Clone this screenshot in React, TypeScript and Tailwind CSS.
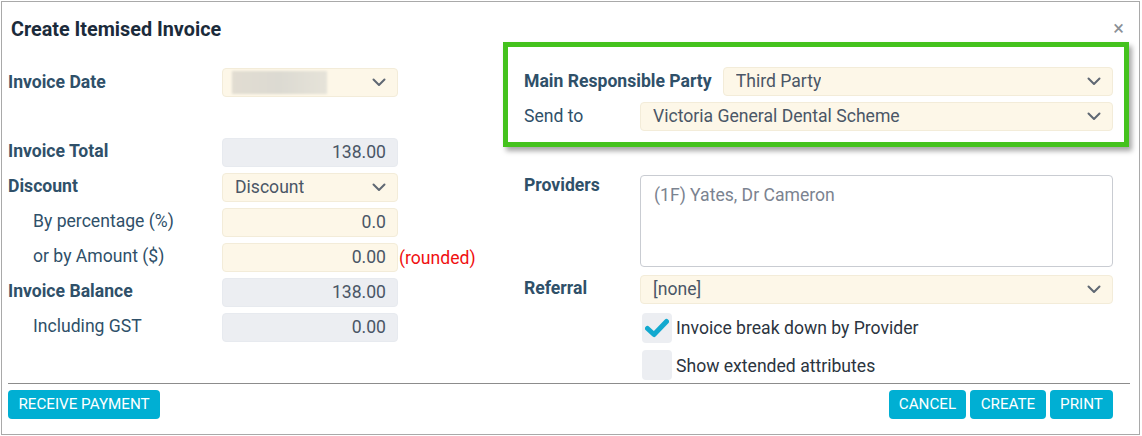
import React from "react";

const Chevron = () => (
  <svg width="14" height="9" viewBox="0 0 14 9" className="shrink-0">
    <path d="M1.5 1.5 L7 7 L12.5 1.5" fill="none" stroke="#5f6873" strokeWidth="2" strokeLinecap="round" strokeLinejoin="round" />
  </svg>
);

const Select = ({ children, className = "" }: { children?: React.ReactNode; className?: string }) => (
  <div className={`flex h-[29px] items-center justify-between rounded-[4px] border border-[#f3ecd9] bg-[#fdf7e8] pl-[12px] pr-[11px] text-[17.6px] text-[#4a5666] ${className}`}>
    <span className="truncate">{children}</span>
    <Chevron />
  </div>
);

const Field = ({ children, cream = false }: { children: React.ReactNode; cream?: boolean }) => (
  <div className={`flex h-[29px] w-[176px] items-center justify-end rounded-[4px] border pr-[11px] text-[17.6px] text-[#4a5666] ${cream ? "border-[#f3ecd9] bg-[#fdf7e8]" : "border-[#e7eaef] bg-[#eceef2]"}`}>
    {children}
  </div>
);

const Row = ({ label, bold = false, indent = false, children }: { label: string; bold?: boolean; indent?: boolean; children: React.ReactNode }) => (
  <div className="flex h-[29px] items-center">
    <div className={`w-[214px] -mt-[2px] text-[17.6px] ${bold ? "font-bold" : ""} ${indent ? "pl-[25px]" : ""} text-[#2f5069]`}>{label}</div>
    {children}
  </div>
);

const Btn = ({ children, className = "" }: { children: React.ReactNode; className?: string }) => (
  <button className={`h-[29px] rounded-[4px] bg-[#00afd3] text-[15.2px] uppercase text-white ${className}`}>{children}</button>
);

export default function App() {
  return (
    <div className="h-[436px] w-[1142px] bg-white" style={{ fontFamily: "Roboto, 'Liberation Sans', sans-serif" }}>
      <div className="relative ml-[1px] mt-[1px] h-[434px] w-[1139px] border border-[#a9a9a9] pl-[6px] pr-[8px]">
        <div className="absolute right-[15px] top-[16px] text-[20px] leading-none text-[#8a8f96]">×</div>
        <h1 className="ml-[3px] pt-[16px] text-[19.8px] font-bold leading-[24px] text-[#1b2b3b]">Create Itemised Invoice</h1>
        <div className="flex">
          {/* left column */}
          <div className="w-[495px] shrink-0">
            <div className="mt-[26px] flex h-[29px] items-center">
              <div className="w-[214px] -mt-[1px] text-[17.6px] font-bold text-[#2f5069]">Invoice Date</div>
              <div className="flex h-[29px] w-[176px] items-center justify-between rounded-[4px] border border-[#f3ecd9] bg-[#fdf7e8] pl-[9px] pr-[11px]">
                <div className="h-[23px] w-[95px] bg-gradient-to-r from-[#e2ddd2] via-[#dcdad2] to-[#e6e3d9] blur-[1px]" />
                <Chevron />
              </div>
            </div>
            <div className="mt-[41px] flex flex-col gap-[6px]">
              <Row label="Invoice Total" bold>
                <Field>138.00</Field>
              </Row>
              <Row label="Discount" bold>
                <Select className="w-[176px]">Discount</Select>
              </Row>
              <Row label="By percentage (%)" indent>
                <Field cream>0.0</Field>
              </Row>
              <Row label="or by Amount ($)" indent>
                <Field cream>0.00</Field>
                <span className="ml-[1px] mt-[2px] text-[17.6px] text-[#f01010]">(rounded)</span>
              </Row>
              <Row label="Invoice Balance" bold>
                <Field>138.00</Field>
              </Row>
              <Row label="Including GST" indent>
                <Field>0.00</Field>
              </Row>
            </div>
          </div>
          {/* right column */}
          <div className="w-[626px] shrink-0">
            <div className="border-[5px] border-[#44c21d] pb-[11px] pl-[16px] pr-[11px] pt-[20px] shadow-[3px_4px_5px_rgba(0,0,0,0.35)]">
              <div className="flex items-center">
                <div className="-mt-[1px] text-[17.6px] font-bold text-[#2f5069]">Main Responsible Party</div>
                <Select className="ml-[11px] flex-1">Third Party</Select>
              </div>
              <div className="mt-[6px] flex items-center">
                <div className="-mt-[1px] w-[116px] text-[17.6px] text-[#2f5069]">Send to</div>
                <Select className="flex-1">Victoria General Dental Scheme</Select>
              </div>
            </div>
            <div className="pl-[21px] pr-[16px]">
              <div className="mt-[28px] flex items-start">
                <div className="w-[116px] text-[17.6px] font-bold leading-[20px] text-[#2f5069]">Providers</div>
                <div className="h-[92px] flex-1 rounded-[4px] border border-[#c9ccd2] bg-white pl-[13px] pt-[6px] text-[17.6px] text-[#7b8390]">
                  (1F) Yates, Dr Cameron
                </div>
              </div>
              <div className="mt-[8px] flex items-center">
                <div className="-mt-[2px] w-[116px] text-[17.6px] font-bold text-[#2f5069]">Referral</div>
                <Select className="flex-1">[none]</Select>
              </div>
              <div className="ml-[118px] mt-[9px] flex items-center">
                <div className="flex h-[30px] w-[30px] items-center justify-center rounded-[4px] bg-[#eceef2]">
                  <svg width="24" height="20" viewBox="0 0 24 20">
                    <path d="M2.5 10.5 L9 16.5 L21.5 3.5" fill="none" stroke="#12a9cf" strokeWidth="5" strokeLinecap="round" strokeLinejoin="round" />
                  </svg>
                </div>
                <span className="ml-[4px] text-[17.6px] text-[#2b3440]">Invoice break down by Provider</span>
              </div>
              <div className="ml-[118px] mt-[7px] flex items-center">
                <div className="h-[30px] w-[30px] rounded-[4px] bg-[#eceef2]" />
                <span className="ml-[4px] mt-[2px] text-[17.6px] text-[#2b3440]">Show extended attributes</span>
              </div>
            </div>
          </div>
        </div>
        <div className="mt-[3px] h-[1px] w-[1122px] bg-[#8c8c8c]" />
        <div className="mt-[6px] flex w-[1122px] items-center pr-[17px]">
          <Btn className="w-[152px]">Receive Payment</Btn>
          <div className="ml-auto flex gap-[4px]">
            <Btn className="w-[77px]">Cancel</Btn>
            <Btn className="w-[76px]">Create</Btn>
            <Btn className="w-[63px]">Print</Btn>
          </div>
        </div>
      </div>
    </div>
  );
}
